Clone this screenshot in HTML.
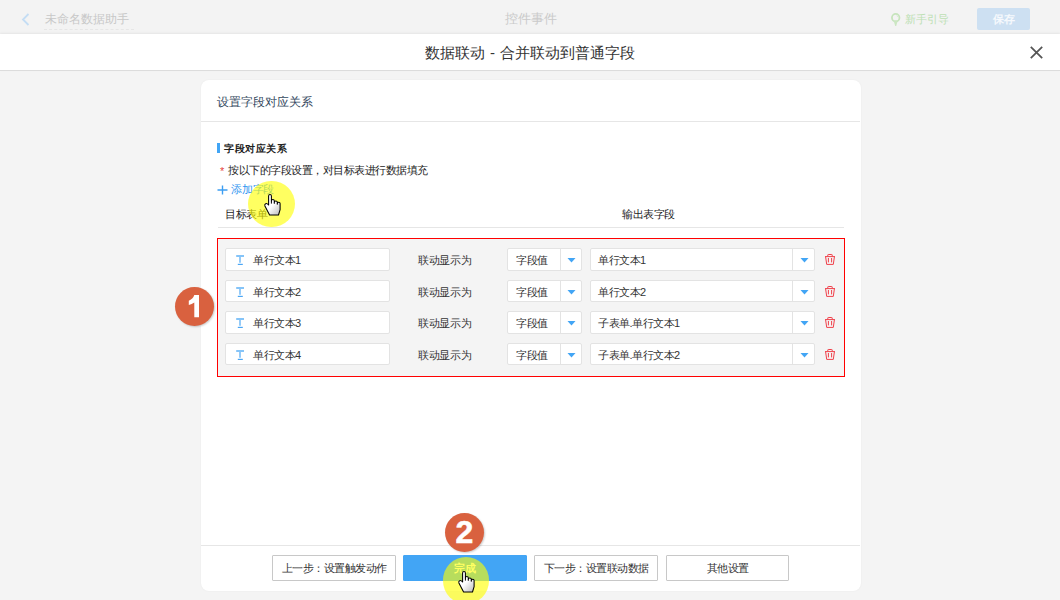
<!DOCTYPE html>
<html><head><meta charset="utf-8">
<style>
*{margin:0;padding:0;box-sizing:border-box}
html,body{width:1060px;height:600px;overflow:hidden;background:#f4f4f4;font-family:"Liberation Sans",sans-serif;color:#333}
.a{position:absolute;white-space:nowrap}
#top{left:0;top:0;width:1060px;height:34px;background:#f3f3f3}
#hdr{left:0;top:34px;width:1060px;height:37px;background:#fff;border-bottom:1px solid #dcdcdc;box-shadow:0 -1px 2px rgba(0,0,0,0.06)}
.card{left:201px;top:80px;width:660px;height:511px;background:#fff;border-radius:8px;box-shadow:0 0 2px rgba(0,0,0,0.05)}
.t12{font-size:12px;line-height:12px}
.t11{font-size:11px;line-height:11px;letter-spacing:-0.5px}
.inp{background:#fff;border:1px solid #e3e3e3;border-radius:2px;height:22px}
.redbox{left:217px;top:238px;width:628px;height:139px;border:1px solid #ff0000;background:#f4f4f4}
.btn{top:555px;height:26px;border:1px solid #c8c8c8;background:#fff;font-size:11px;letter-spacing:-0.5px;line-height:24px;text-align:center;border-radius:1px;color:#333}
.badge{width:39px;height:39px;border-radius:50%;background:#d9613f;color:#fff;font-weight:bold;font-size:32px;line-height:39px;text-align:center;box-shadow:1px 1px 2px rgba(0,0,0,0.2);-webkit-text-stroke:0.6px #fff}
.hl{width:47px;height:47px;border-radius:50%;background:rgba(255,255,0,0.62)}
</style></head><body>
<div id="top" class="a"></div>
<!-- back arrow -->
<svg class="a" style="left:21px;top:13px" width="10" height="13" viewBox="0 0 10 13"><path d="M7.5 1 L2 6.5 L7.5 12" fill="none" stroke="#c4ddf4" stroke-width="1.8"/></svg>
<div class="a t12" style="left:45px;top:13px;color:#c8c8c8">未命名数据助手</div>
<div class="a" style="left:44px;top:29px;width:90px;border-top:1px dashed #e6e6e6"></div>
<div class="a" style="left:505px;top:13px;color:#cacaca;font-size:12.5px;line-height:12px">控件事件</div>
<!-- bulb -->
<svg class="a" style="left:886px;top:8px" width="20" height="22" viewBox="0 0 20 22"><circle cx="9.7" cy="9.7" r="3.75" fill="none" stroke="#c6e4bc" stroke-width="1.8"/><path d="M7.6 12.5 L9.2 17.9 L10.2 17.9 L11.8 12.5 Z" fill="#cbe6c2"/><path d="M10.6 7.7 Q11.6 8.1 12 9.1" fill="none" stroke="#cfe8c6" stroke-width="0.8"/></svg>
<div class="a" style="left:905px;top:14px;color:#bde0b3;font-size:11px;line-height:11px">新手引导</div>
<div class="a" style="left:977px;top:8px;width:53px;height:22px;background:#cde0f2;border-radius:2px;color:#f6f9fd;font-size:11px;font-weight:bold;line-height:22px;text-align:center">保存</div>

<div id="hdr" class="a"></div>
<div class="a" style="left:0;top:44px;width:1060px;text-align:center;font-size:15px;line-height:17px;color:#333;word-spacing:0.9px">数据联动 - 合并联动到普通字段</div>
<svg class="a" style="left:1029px;top:45px" width="15" height="15" viewBox="0 0 15 15"><path d="M1.8 1.8 L13.2 13.2 M13.2 1.8 L1.8 13.2" stroke="#555" stroke-width="1.75"/></svg>

<div class="a card"></div>
<div class="a t12" style="left:217px;top:96px;color:#34495e">设置字段对应关系</div>
<div class="a" style="left:201px;top:121px;width:659px;height:1px;background:#e6e6e6"></div>

<div class="a" style="left:217px;top:143px;width:3px;height:10px;background:#42a5f5"></div>
<div class="a" style="left:224px;top:143px;font-weight:bold;color:#222;font-size:10px;line-height:11px;letter-spacing:0.6px">字段对应关系</div>
<div class="a t11" style="left:220px;top:166px;color:#e64340">*</div>
<div class="a t11" style="left:228px;top:165px;color:#222">按以下的字段设置，对目标表进行数据填充</div>
<svg class="a" style="left:217px;top:185px" width="11" height="10" viewBox="0 0 11 10"><path d="M0.5 5 L10.5 5 M5.5 0.5 L5.5 9.5" stroke="#3d9ef2" stroke-width="1.4"/></svg>
<div class="a" style="left:231px;top:184px;color:#2f95f0;font-size:11px;line-height:11px;letter-spacing:-0.2px">添加字段</div>
<div class="a t11" style="left:225px;top:209px;color:#222">目标表单</div>
<div class="a t11" style="left:622px;top:209px;color:#222">输出表字段</div>
<div class="a" style="left:218px;top:227px;width:626px;height:1px;background:#e6e6e6"></div>

<div class="a redbox"></div>

<!--ROWS-->
<div class="a inp" style="left:225px;top:248px;width:165px;height:23px"></div>
<svg class="a" style="left:230px;top:250px" width="20" height="20" viewBox="0 0 20 20"><path d="M6.2 6 L14 6" stroke="#5cb0f6" stroke-width="1.5"/><path d="M10 6.8 L10 12.8" stroke="#8ac6f8" stroke-width="1.8"/><path d="M7.8 14.4 L12.8 14.4" stroke="#4aa6f5" stroke-width="1.2"/></svg>
<div class="a t11" style="left:253px;top:254.5px;color:#333">单行文本1</div>
<div class="a t11" style="left:418px;top:254.5px;color:#333;letter-spacing:-0.3px">联动显示为</div>
<div class="a inp" style="left:507px;top:248px;width:75px;height:23px"></div>
<div class="a" style="left:560px;top:248px;width:1px;height:22px;background:#e3e3e3"></div>
<div class="a t11" style="left:516px;top:254.5px;color:#333">字段值</div>
<svg class="a" style="left:567px;top:258px" width="9" height="5" viewBox="0 0 9 5"><path d="M0.5 0 L8.5 0 L4.5 4.5 Z" fill="#42a5f5"/></svg>
<div class="a inp" style="left:590px;top:248px;width:225px;height:23px"></div>
<div class="a" style="left:792px;top:248px;width:1px;height:22px;background:#e3e3e3"></div>
<div class="a t11" style="left:598px;top:254.5px;color:#333">单行文本1</div>
<svg class="a" style="left:800px;top:258px" width="9" height="5" viewBox="0 0 9 5"><path d="M0.5 0 L8.5 0 L4.5 4.5 Z" fill="#42a5f5"/></svg>
<svg class="a" style="left:818px;top:248px" width="24" height="24" viewBox="0 0 24 24"><path d="M9.8 8.4 L9.8 6.9 Q9.8 6.5 10.3 6.5 L13.7 6.5 Q14.2 6.5 14.2 6.9 L14.2 8.4 M7 8.6 L17 8.6 M7.6 8.8 L8.7 16.4 L15.3 16.4 L16.4 8.8 M10.4 10 L10.4 14.4 M13.6 10 L13.6 14.4" fill="none" stroke="#f0404a" stroke-width="1"/></svg>
<div class="a inp" style="left:225px;top:280px;width:165px;height:22px"></div>
<svg class="a" style="left:230px;top:282px" width="20" height="20" viewBox="0 0 20 20"><path d="M6.2 6 L14 6" stroke="#5cb0f6" stroke-width="1.5"/><path d="M10 6.8 L10 12.8" stroke="#8ac6f8" stroke-width="1.8"/><path d="M7.8 14.4 L12.8 14.4" stroke="#4aa6f5" stroke-width="1.2"/></svg>
<div class="a t11" style="left:253px;top:286.5px;color:#333">单行文本2</div>
<div class="a t11" style="left:418px;top:286.5px;color:#333;letter-spacing:-0.3px">联动显示为</div>
<div class="a inp" style="left:507px;top:280px;width:75px;height:22px"></div>
<div class="a" style="left:560px;top:280px;width:1px;height:22px;background:#e3e3e3"></div>
<div class="a t11" style="left:516px;top:286.5px;color:#333">字段值</div>
<svg class="a" style="left:567px;top:290px" width="9" height="5" viewBox="0 0 9 5"><path d="M0.5 0 L8.5 0 L4.5 4.5 Z" fill="#42a5f5"/></svg>
<div class="a inp" style="left:590px;top:280px;width:225px;height:22px"></div>
<div class="a" style="left:792px;top:280px;width:1px;height:22px;background:#e3e3e3"></div>
<div class="a t11" style="left:598px;top:286.5px;color:#333">单行文本2</div>
<svg class="a" style="left:800px;top:290px" width="9" height="5" viewBox="0 0 9 5"><path d="M0.5 0 L8.5 0 L4.5 4.5 Z" fill="#42a5f5"/></svg>
<svg class="a" style="left:818px;top:280px" width="24" height="24" viewBox="0 0 24 24"><path d="M9.8 8.4 L9.8 6.9 Q9.8 6.5 10.3 6.5 L13.7 6.5 Q14.2 6.5 14.2 6.9 L14.2 8.4 M7 8.6 L17 8.6 M7.6 8.8 L8.7 16.4 L15.3 16.4 L16.4 8.8 M10.4 10 L10.4 14.4 M13.6 10 L13.6 14.4" fill="none" stroke="#f0404a" stroke-width="1"/></svg>
<div class="a inp" style="left:225px;top:311px;width:165px;height:23px"></div>
<svg class="a" style="left:230px;top:313px" width="20" height="20" viewBox="0 0 20 20"><path d="M6.2 6 L14 6" stroke="#5cb0f6" stroke-width="1.5"/><path d="M10 6.8 L10 12.8" stroke="#8ac6f8" stroke-width="1.8"/><path d="M7.8 14.4 L12.8 14.4" stroke="#4aa6f5" stroke-width="1.2"/></svg>
<div class="a t11" style="left:253px;top:317.5px;color:#333">单行文本3</div>
<div class="a t11" style="left:418px;top:317.5px;color:#333;letter-spacing:-0.3px">联动显示为</div>
<div class="a inp" style="left:507px;top:311px;width:75px;height:23px"></div>
<div class="a" style="left:560px;top:311px;width:1px;height:22px;background:#e3e3e3"></div>
<div class="a t11" style="left:516px;top:317.5px;color:#333">字段值</div>
<svg class="a" style="left:567px;top:321px" width="9" height="5" viewBox="0 0 9 5"><path d="M0.5 0 L8.5 0 L4.5 4.5 Z" fill="#42a5f5"/></svg>
<div class="a inp" style="left:590px;top:311px;width:225px;height:23px"></div>
<div class="a" style="left:792px;top:311px;width:1px;height:22px;background:#e3e3e3"></div>
<div class="a t11" style="left:598px;top:317.5px;color:#333">子表单.单行文本1</div>
<svg class="a" style="left:800px;top:321px" width="9" height="5" viewBox="0 0 9 5"><path d="M0.5 0 L8.5 0 L4.5 4.5 Z" fill="#42a5f5"/></svg>
<svg class="a" style="left:818px;top:311px" width="24" height="24" viewBox="0 0 24 24"><path d="M9.8 8.4 L9.8 6.9 Q9.8 6.5 10.3 6.5 L13.7 6.5 Q14.2 6.5 14.2 6.9 L14.2 8.4 M7 8.6 L17 8.6 M7.6 8.8 L8.7 16.4 L15.3 16.4 L16.4 8.8 M10.4 10 L10.4 14.4 M13.6 10 L13.6 14.4" fill="none" stroke="#f0404a" stroke-width="1"/></svg>
<div class="a inp" style="left:225px;top:343px;width:165px;height:22px"></div>
<svg class="a" style="left:230px;top:345px" width="20" height="20" viewBox="0 0 20 20"><path d="M6.2 6 L14 6" stroke="#5cb0f6" stroke-width="1.5"/><path d="M10 6.8 L10 12.8" stroke="#8ac6f8" stroke-width="1.8"/><path d="M7.8 14.4 L12.8 14.4" stroke="#4aa6f5" stroke-width="1.2"/></svg>
<div class="a t11" style="left:253px;top:349.5px;color:#333">单行文本4</div>
<div class="a t11" style="left:418px;top:349.5px;color:#333;letter-spacing:-0.3px">联动显示为</div>
<div class="a inp" style="left:507px;top:343px;width:75px;height:22px"></div>
<div class="a" style="left:560px;top:343px;width:1px;height:22px;background:#e3e3e3"></div>
<div class="a t11" style="left:516px;top:349.5px;color:#333">字段值</div>
<svg class="a" style="left:567px;top:353px" width="9" height="5" viewBox="0 0 9 5"><path d="M0.5 0 L8.5 0 L4.5 4.5 Z" fill="#42a5f5"/></svg>
<div class="a inp" style="left:590px;top:343px;width:225px;height:22px"></div>
<div class="a" style="left:792px;top:343px;width:1px;height:22px;background:#e3e3e3"></div>
<div class="a t11" style="left:598px;top:349.5px;color:#333">子表单.单行文本2</div>
<svg class="a" style="left:800px;top:353px" width="9" height="5" viewBox="0 0 9 5"><path d="M0.5 0 L8.5 0 L4.5 4.5 Z" fill="#42a5f5"/></svg>
<svg class="a" style="left:818px;top:343px" width="24" height="24" viewBox="0 0 24 24"><path d="M9.8 8.4 L9.8 6.9 Q9.8 6.5 10.3 6.5 L13.7 6.5 Q14.2 6.5 14.2 6.9 L14.2 8.4 M7 8.6 L17 8.6 M7.6 8.8 L8.7 16.4 L15.3 16.4 L16.4 8.8 M10.4 10 L10.4 14.4 M13.6 10 L13.6 14.4" fill="none" stroke="#f0404a" stroke-width="1"/></svg>
<!--/ROWS-->

<div class="a" style="left:201px;top:545px;width:659px;height:1px;background:#e6e6e6"></div>
<div class="a btn" style="left:272px;width:124px">上一步：设置触发动作</div>
<div class="a btn" style="left:403px;width:124px;background:#42a5f5;border-color:#42a5f5;color:#fff;font-weight:bold;letter-spacing:0">完成</div>
<div class="a btn" style="left:534px;width:124px">下一步：设置联动数据</div>
<div class="a btn" style="left:666px;width:123px">其他设置</div>

<div class="a badge" style="left:175px;top:287px"></div>
<svg class="a" style="left:180px;top:290px" width="30" height="32" viewBox="0 0 30 32"><path d="M14.3 5.1 L19 5.1 L19 27.2 L14.3 27.2 L14.3 12.6 Q11.8 14.4 8.8 15 L8.8 10.8 Q10.5 10.2 12.2 8.6 Q13.6 7.2 14.3 5.1 Z" fill="#fff"/></svg>
<div class="a badge" style="left:445px;top:513px">2</div>

<div class="a hl" style="left:248.3px;top:180.5px;width:46.5px;height:46.5px"></div>
<div class="a hl" style="left:442.6px;top:557px;width:46.5px;height:46.5px"></div>
<svg class="a" style="left:262px;top:192px" width="22" height="26" viewBox="0 0 22 26"><defs><linearGradient id="hg1" x1="0.3" y1="0.35" x2="0.85" y2="1"><stop offset="0.3" stop-color="#fff"/><stop offset="1" stop-color="#c4c4c4"/></linearGradient></defs><path d="M6.6 13 L6.6 3.9 A1.4 1.4 0 0 1 9.4 3.9 L9.4 8.9 A1.45 1.4 0 0 1 12.3 8.9 L12.3 10.2 A1.5 1.3 0 0 1 15.3 10.2 L15.3 11.5 A1.4 1.3 0 0 1 18.1 11.5 L18.1 17.6 L16.5 23 L7.6 23 L2.9 13.9 Q2.4 12.3 3.7 11.7 Q5 11.2 6.6 13 Z" fill="url(#hg1)" stroke="#000" stroke-width="1.05" stroke-linejoin="round"/><path d="M9.4 8.9 L9.4 11.6 M12.3 10.2 L12.3 11.8 M15.3 11.5 L15.3 12.7" stroke="#000" stroke-width="1"/></svg>
<svg class="a" style="left:456px;top:569px" width="22" height="26" viewBox="0 0 22 26"><defs><linearGradient id="hg2" x1="0.3" y1="0.35" x2="0.85" y2="1"><stop offset="0.3" stop-color="#fff"/><stop offset="1" stop-color="#c4c4c4"/></linearGradient></defs><path d="M6.6 13 L6.6 3.9 A1.4 1.4 0 0 1 9.4 3.9 L9.4 8.9 A1.45 1.4 0 0 1 12.3 8.9 L12.3 10.2 A1.5 1.3 0 0 1 15.3 10.2 L15.3 11.5 A1.4 1.3 0 0 1 18.1 11.5 L18.1 17.6 L16.5 23 L7.6 23 L2.9 13.9 Q2.4 12.3 3.7 11.7 Q5 11.2 6.6 13 Z" fill="url(#hg2)" stroke="#000" stroke-width="1.05" stroke-linejoin="round"/><path d="M9.4 8.9 L9.4 11.6 M12.3 10.2 L12.3 11.8 M15.3 11.5 L15.3 12.7" stroke="#000" stroke-width="1"/></svg>
</body></html>
